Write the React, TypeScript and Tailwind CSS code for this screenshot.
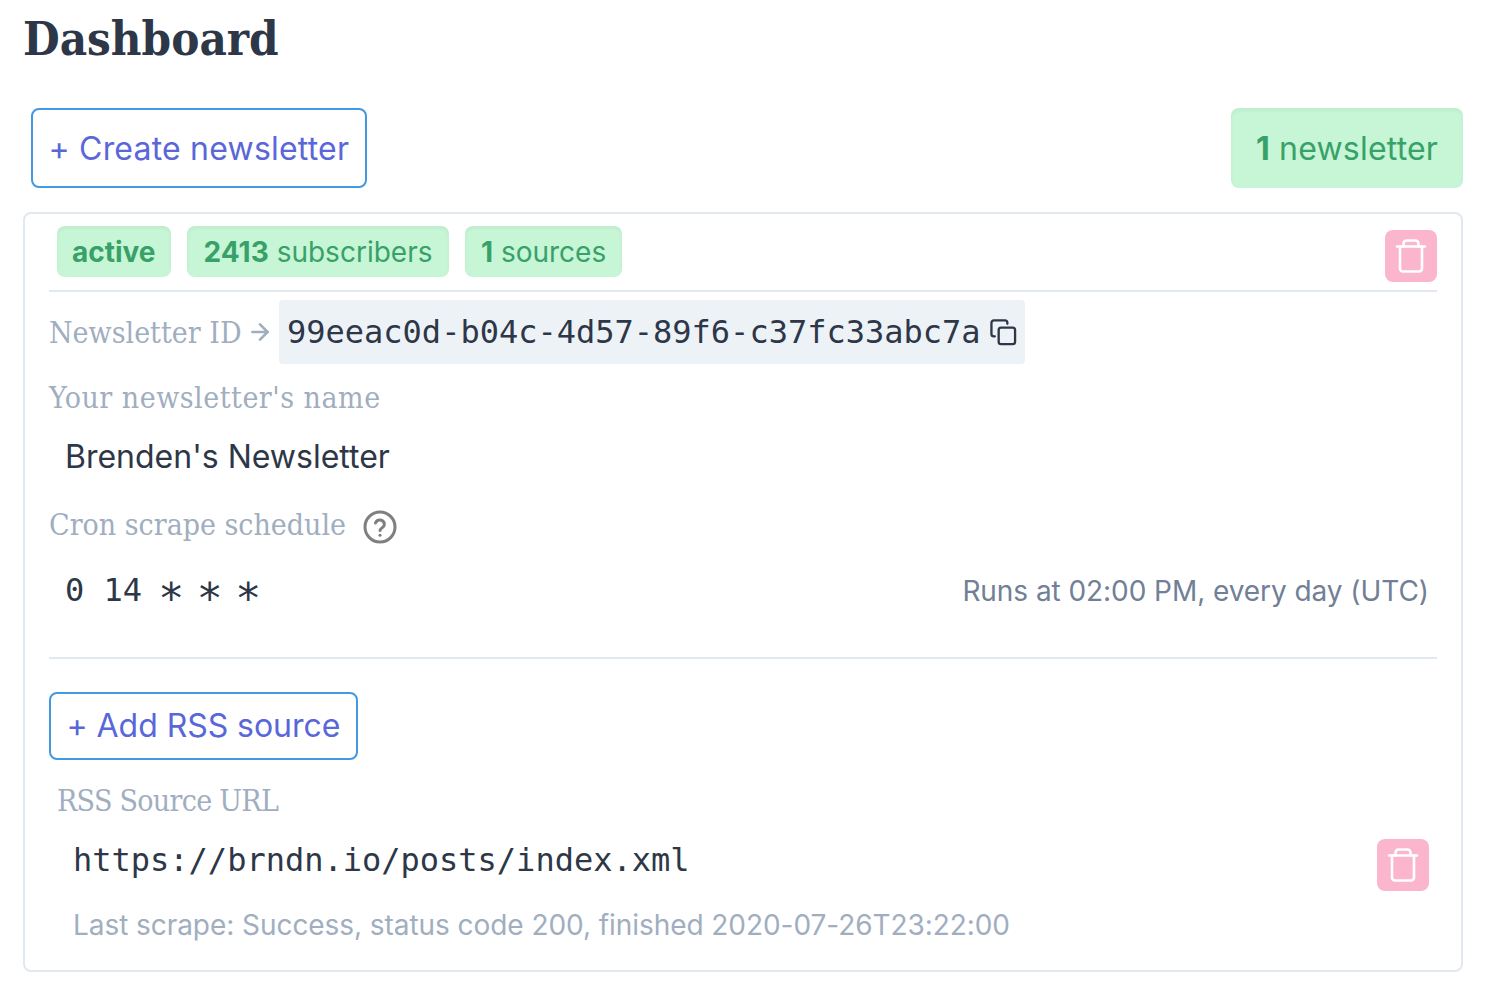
import { ArrowRight } from 'lucide-react';

const serif = "font-['DejaVu_Serif_Condensed','Liberation_Serif',serif]";
const mono = "font-['DejaVu_Sans_Mono',monospace]";

const TrashButton = () => (
    <button className="w-[52px] h-[52px] shrink-0 rounded-lg bg-[#fbb6ce] flex items-center justify-center">
        <svg width="32" height="36" viewBox="0 0 32 36" fill="none" stroke="#fff" strokeWidth="2.6" strokeLinecap="round" strokeLinejoin="round">
            <path d="M2 8.5h28" />
            <path d="M8.5 8.5V5.5a3 3 0 0 1 3-3h9a3 3 0 0 1 3 3v3" />
            <path d="M5 8.5v22a3 3 0 0 0 3 3h16a3 3 0 0 0 3-3v-22" />
        </svg>
    </button>
);

const Badge = ({ className, children }: { className: string; children: React.ReactNode }) => (
    <span className={`${className} h-[51px] rounded-lg bg-[#c6f6d5] shadow-inner text-[#38a169] text-[28px] flex items-center whitespace-nowrap`}>
        {children}
    </span>
);

const CopyIcon = () => (
    <svg width="27" height="27" viewBox="0 0 28 28" fill="none" stroke="#2d3748" strokeWidth="2.4" strokeLinecap="round" strokeLinejoin="round">
        <rect x="9" y="9" width="17" height="17" rx="2.5" />
        <path d="M5 18H4a2.5 2.5 0 0 1-2.5-2.5V4A2.5 2.5 0 0 1 4 1.5h11.5A2.5 2.5 0 0 1 18 4v1" />
    </svg>
);

const HelpIcon = () => (
    <svg width="34" height="34" viewBox="0 0 34 34" fill="none" stroke="#7f7f7f" strokeWidth="3" strokeLinecap="round" strokeLinejoin="round">
        <circle cx="17" cy="17" r="15" />
        <path d="M12.5 13a4.6 4.6 0 0 1 8.9 1.5c0 3-4.4 3.6-4.4 6" />
        <path d="M17 25.2v.1" />
    </svg>
);

const Star = () => (
    <span className="inline-block w-[19.26px] text-center text-[43px] leading-none align-top relative top-[11px] left-[-3px]">*</span>
);

export default function App() {
    return (
        <div className="w-[1494px] h-[990px] overflow-hidden bg-white font-['Inter',sans-serif] text-[#2d3748] pl-[23px] pr-[31px]">
            <h1 className={`${serif} text-[47px] font-bold leading-[78px] h-[108px]`}>Dashboard</h1>

            <div className="flex items-start justify-between pl-2 h-[104px]">
                <button className="h-20 px-[15.5px] pt-0.5 border-2 border-[#4299e1] rounded-lg text-[#5a67d8] text-[32px] tracking-[0.2px] whitespace-nowrap">
                    + Create newsletter
                </button>
                <span className="h-20 w-[232px] pt-0.5 rounded-lg bg-[#c6f6d5] shadow-inner text-[#38a169] text-[32px] tracking-[0.2px] flex items-center justify-center whitespace-nowrap">
                    <b className="font-bold">1</b>&nbsp;newsletter
                </span>
            </div>

            <div className="w-[1440px] h-[760px] border-2 border-[#e2e8f0] rounded-lg px-6 pt-3">
                <div className="h-[66px] border-b-2 border-[#e2e8f0] flex justify-between items-start">
                    <div className="flex gap-4 pl-2">
                        <Badge className="px-[15px]"><b className="font-bold">active</b></Badge>
                        <Badge className="px-[17px]"><b className="font-bold">2413</b>&nbsp;subscribers</Badge>
                        <Badge className="px-[15.5px]"><b className="font-bold">1</b>&nbsp;sources</Badge>
                    </div>
                    <div className="pt-1"><TrashButton /></div>
                </div>

                <div className="flex items-center mt-2 h-16">
                    <span className={`${serif} text-[30px] w-[198px] text-[#a0aec0] whitespace-nowrap`}>Newsletter ID</span>
                    <ArrowRight size={26} strokeWidth={2.4} className="text-[#a0aec0] shrink-0 mr-[6px]" />
                    <span className="h-16 pl-2 pr-2 rounded bg-[#edf2f7] flex items-center gap-[9px]">
                        <span className={`${mono} text-[32px]`}>99eeac0d-b04c-4d57-89f6-c37fc33abc7a</span>
                        <CopyIcon />
                    </span>
                </div>

                <div className={`${serif} text-[30px] tracking-[0.5px] text-[#a0aec0] mt-[17px] leading-[34px]`}>Your newsletter's name</div>
                <div className="text-[32px] pl-4 mt-[25px] leading-[34px]">Brenden's Newsletter</div>

                <div className="flex items-start gap-[17px] mt-[33px] h-[37px]">
                    <span className={`${serif} text-[30px] text-[#a0aec0] leading-[36px]`}>Cron scrape schedule</span>
                    <span className="pt-[3px]"><HelpIcon /></span>
                </div>
                <div className="flex items-center justify-between pl-4 pr-[8px] mt-[26px] h-[40px]">
                    <span className={`${mono} text-[32px] whitespace-pre`}>0 14 <Star /> <Star /> <Star /></span>
                    <span className="text-[28px] tracking-[-0.06px] text-[#718096] pt-0.5">Runs at 02:00 PM, every day (UTC)</span>
                </div>

                <div className="border-t-2 border-[#e2e8f0] mt-[47px]" />

                <button className="mt-[33px] h-[68px] px-[15.5px] border-2 border-[#4299e1] rounded-lg text-[#5a67d8] text-[32px] tracking-[-0.05px] whitespace-nowrap">
                    + Add RSS source
                </button>

                <div className={`${serif} text-[30px] tracking-[-0.7px] text-[#a0aec0] pl-2 mt-6 leading-[34px]`}>RSS Source URL</div>
                <div className="flex items-start justify-between pl-6 pr-2 mt-6">
                    <span className={`${mono} text-[32px] leading-[36px]`}>https://brndn.io/posts/index.xml</span>
                    <div className="-mt-[3px]"><TrashButton /></div>
                </div>
                <div className="text-[28px] tracking-[-0.06px] text-[#a0aec0] pl-6 mt-[17px] leading-[34px]">Last scrape: Success, status code 200, finished 2020-07-26T23:22:00</div>
            </div>
        </div>
    );
}
